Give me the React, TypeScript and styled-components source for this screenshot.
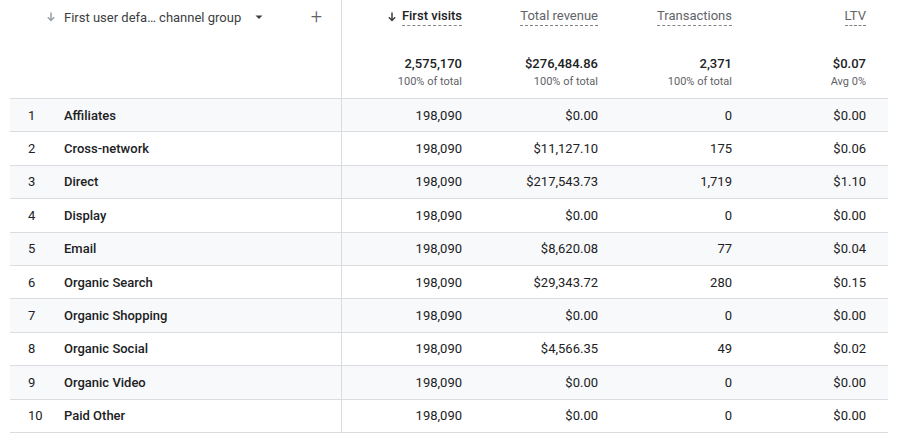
import React from "react";
import styled, {createGlobalStyle} from "styled-components";

const GlobalStyle = createGlobalStyle`
  body {
    margin: 0;
    background: #fff;
    font-family: Roboto, "Liberation Sans", sans-serif;
  }
`;

const rows: [string, string, string, string, string][] = [
  ["Affiliates", "198,090", "$0.00", "0", "$0.00"],
  ["Cross-network", "198,090", "$11,127.10", "175", "$0.06"],
  ["Direct", "198,090", "$217,543.73", "1,719", "$1.10"],
  ["Display", "198,090", "$0.00", "0", "$0.00"],
  ["Email", "198,090", "$8,620.08", "77", "$0.04"],
  ["Organic Search", "198,090", "$29,343.72", "280", "$0.15"],
  ["Organic Shopping", "198,090", "$0.00", "0", "$0.00"],
  ["Organic Social", "198,090", "$4,566.35", "49", "$0.02"],
  ["Organic Video", "198,090", "$0.00", "0", "$0.00"],
  ["Paid Other", "198,090", "$0.00", "0", "$0.00"]
];

const metrics = [
  {label: "First visits", total: "2,575,170", sub: "100% of total", sorted: true},
  {label: "Total revenue", total: "$276,484.86", sub: "100% of total"},
  {label: "Transactions", total: "2,371", sub: "100% of total"},
  {label: "LTV", total: "$0.07", sub: "Avg 0%"}
];

const COLS = "54px 278px 132px 136px 134px 144px";

export default function App() {
  return (
    <>
      <GlobalStyle />
      <Table>
        <HeadRow>
          <DimHead>
            <DimLabel>
              <ArrowIcon color="#9aa0a6" />
              <span>First user defa… channel group</span>
              <Caret />
            </DimLabel>
            <Plus>+</Plus>
          </DimHead>
          {metrics.map((m, i) => (
            <MetricHead key={m.label} $last={i === 3}>
              {m.sorted && <ArrowIcon color="#3c4043" />}
              <Dashed $dark={!!m.sorted}>{m.label}</Dashed>
            </MetricHead>
          ))}
        </HeadRow>
        <TotalsRow>
          <TotalsBlank />
          {metrics.map((m, i) => (
            <TotalCell key={m.label} $last={i === 3}>
              <TotalValue>{m.total}</TotalValue>
              <TotalSub>{m.sub}</TotalSub>
            </TotalCell>
          ))}
        </TotalsRow>
        {rows.map((r, i) => (
          <Row key={r[0]} $shaded={i % 2 === 0}>
            <Index>{i + 1}</Index>
            <Name>{r[0]}</Name>
            <Num>{r[1]}</Num>
            <Num>{r[2]}</Num>
            <Num>{r[3]}</Num>
            <Num $last>{r[4]}</Num>
          </Row>
        ))}
      </Table>
    </>
  );
}

function ArrowIcon({color}: {color: string}) {
  return (
    <svg width="12" height="12" viewBox="0 0 12 12" style={{flexShrink: 0}}>
      <path d="M6 1.5v8M2.8 6.3L6 9.5l3.2-3.2" stroke={color} strokeWidth="1.5" fill="none" />
    </svg>
  );
}

function Caret() {
  return (
    <svg width="10" height="10" viewBox="0 0 10 10" style={{marginLeft: 6}}>
      <path d="M1.5 3.5h7L5 7z" fill="#3c4043" />
    </svg>
  );
}

const Table = styled.div`
  margin-left: 10px;
  width: 878px;
  color: #202124;
  font-size: 13px;
`;

const Grid = styled.div`
  display: grid;
  grid-template-columns: ${COLS};
`;

const HeadRow = styled(Grid)`
  height: 37px;
`;

const DimHead = styled.div`
  grid-column: 1 / 3;
  display: flex;
  align-items: center;
  justify-content: space-between;
  padding: 0 19px 0 35px;
  border-right: 1px solid #dadce0;
  height: 100%;
`;

const DimLabel = styled.div`
  display: flex;
  align-items: center;
  gap: 7px;
  color: #3c4043;
  font-size: 13px;
  margin-top: -3px;
`;

const Plus = styled.span`
  font-size: 20px;
  font-weight: 300;
  color: #5f6368;
  margin-top: -5px;
`;

const MetricHead = styled.div<{$last?: boolean}>`
  display: flex;
  align-items: center;
  justify-content: flex-end;
  gap: 4px;
  padding-right: ${p => (p.$last ? 22 : 12)}px;
  margin-top: -3px;
`;

const Dashed = styled.span<{$dark: boolean}>`
  color: ${p => (p.$dark ? "#202124" : "#5f6368")};
  border-bottom: 1px dashed #80868b;
  padding-bottom: 2px;
  font-weight: ${p => (p.$dark ? 500 : 400)};
`;

const TotalsRow = styled(Grid)`
  height: 61px;
  border-bottom: 1px solid #dadce0;
`;

const TotalsBlank = styled.div`
  grid-column: 1 / 3;
  border-right: 1px solid #dadce0;
`;

const TotalCell = styled.div<{$last?: boolean}>`
  display: flex;
  flex-direction: column;
  align-items: flex-end;
  padding-right: ${p => (p.$last ? 22 : 12)}px;
  padding-top: 19px;
`;

const TotalValue = styled.div`
  font-weight: 500;
  font-size: 13px;
`;

const TotalSub = styled.div`
  font-size: 11px;
  color: #5f6368;
  margin-top: 4px;
`;

const Row = styled(Grid)<{$shaded: boolean}>`
  height: 32.4px;
  align-items: center;
  background: ${p => (p.$shaded ? "#f8f9fa" : "#fff")};
  border-bottom: 1px solid #dadce0;
`;

const Index = styled.div`
  padding-left: 18px;
`;

const Name = styled.div`
  font-weight: 500;
  height: 100%;
  display: flex;
  align-items: center;
  border-right: 1px solid #dadce0;
`;

const Num = styled.div<{$last?: boolean}>`
  text-align: right;
  padding-right: ${p => (p.$last ? 22 : 12)}px;
`;
